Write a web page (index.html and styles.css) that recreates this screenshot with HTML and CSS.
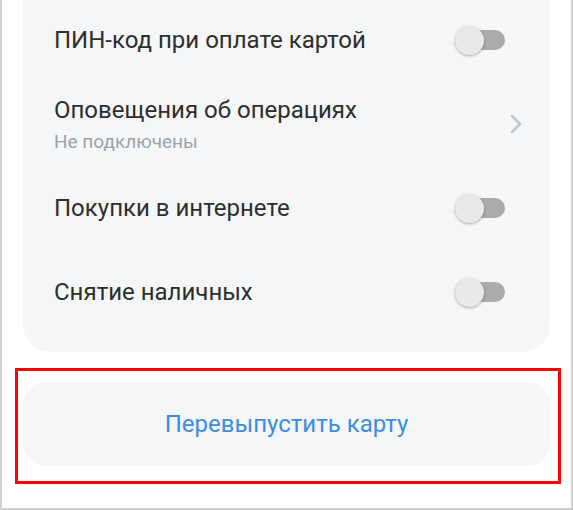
FILE: index.html
```html
<!DOCTYPE html>
<html lang="ru">
<head>
  <meta charset="UTF-8">
  <meta name="viewport" content="width=device-width, initial-scale=1.0">
  <title>Настройки карты</title>
  <link rel="stylesheet" href="styles.css">
</head>
<body>
  <div class="screen">
    <div class="settings">
      <div class="row">
        <span class="label">ПИН-код при оплате картой</span>
        <span class="switch"></span>
      </div>
      <div class="row row-link">
        <div>
          <div class="label">Оповещения об операциях</div>
          <div class="hint">Не подключены</div>
        </div>
        <svg class="chevron" width="12" height="20" viewBox="0 0 12 20">
          <path d="M2 2 L10 10 L2 18" fill="none" stroke="#c3c7cd" stroke-width="2.6" stroke-linecap="round" stroke-linejoin="round"/>
        </svg>
      </div>
      <div class="row">
        <span class="label">Покупки в интернете</span>
        <span class="switch"></span>
      </div>
      <div class="row">
        <span class="label">Снятие наличных</span>
        <span class="switch"></span>
      </div>
    </div>

    <button class="reissue">Перевыпустить карту</button>
    <div class="highlight"></div>
  </div>
</body>
</html>
```

FILE: styles.css
```css
body {
  margin: 0;
  padding: 0;
  font-family: Roboto, "Liberation Sans", sans-serif;
  background-color: #fff;
  color: #2e2e2e;
}

.screen {
  position: relative;
  width: 573px;
  height: 510px;
  box-sizing: border-box;
  border: 2px solid #cfcfcf;
  border-top: none;
  overflow: hidden;
}

.settings {
  margin: -2px 21px 0;
  padding-bottom: 18px;
  background: #f5f6f8;
  border-radius: 0 0 28px 28px;
}

.row {
  height: 84px;
  display: flex;
  align-items: center;
  justify-content: space-between;
  padding: 0 45px 0 31px;
}

.row-link {
  padding-right: 28px;
}

.label {
  font-size: 24px;
  line-height: 30px;
}

.hint {
  font-size: 19px;
  line-height: 22px;
  margin-top: 6px;
  color: #9ba3ad;
}

.switch {
  position: relative;
  width: 50px;
  height: 20px;
  border-radius: 10px;
  background: #ababab;
}

.switch::before {
  content: "";
  position: absolute;
  left: 0;
  top: -4px;
  width: 29px;
  height: 29px;
  border-radius: 50%;
  background: #e8e8e8;
  box-shadow: 0 1px 3px rgba(0, 0, 0, 0.3);
}

.reissue {
  display: block;
  width: 527px;
  height: 84px;
  margin: 30px 21px 0;
  border: none;
  border-radius: 22px;
  background: #f5f6f8;
  color: #3b8de2;
  font-family: Roboto, "Liberation Sans", sans-serif;
  font-size: 24px;
}

.highlight {
  position: absolute;
  left: 13px;
  top: 368px;
  width: 546px;
  height: 116px;
  box-sizing: border-box;
  border: 3px solid #ff0000;
}
```
